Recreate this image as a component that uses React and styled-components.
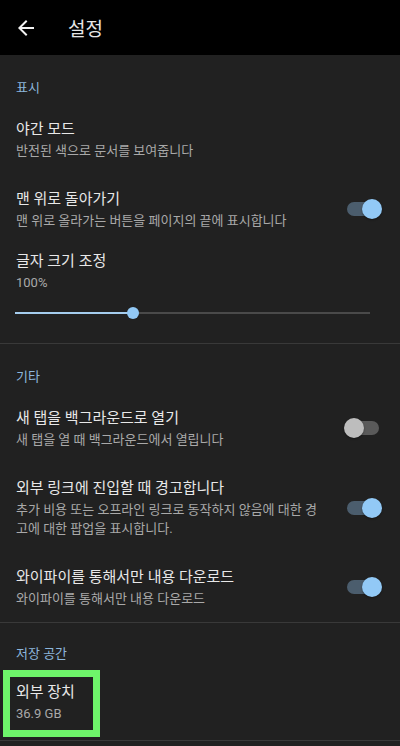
import React from "react"
import styled, {createGlobalStyle} from "styled-components"

const GlobalStyle = createGlobalStyle`
  html, body {
    margin: 0;
    padding: 0;
    background: #212121;
  }
  body {
    font-family: Roboto, "Noto Sans CJK KR", sans-serif;
    -webkit-font-smoothing: antialiased;
  }
`

const Screen = styled.div`
  width: 400px;
  min-height: 746px;
  background: #212121;
  display: flex;
  flex-direction: column;
`

const TopBar = styled.header`
  height: 55px;
  background: #000;
  display: flex;
  align-items: center;
  padding-left: 14px;
  gap: 30px;
`

const BackIcon = styled.svg`
  width: 24px;
  height: 24px;
  fill: #f2f2f2;
`

const TopTitle = styled.h1`
  margin: 0;
  font-size: 19px;
  font-weight: 400;
  color: #e6e6e6;
`

const Category = styled.div`
  padding: ${({$top = 24}) => $top}px 16px 7px;
  font-size: 13px;
  line-height: 18px;
  color: #8cb6dc;
`

const Row = styled.div`
  display: flex;
  align-items: center;
  padding: ${({$top = 14}) => $top}px 18px ${({$bottom = 14}) => $bottom}px 16px;
`

const RowText = styled.div`
  flex: 1;
  min-width: 0;
  padding-right: ${({$gap}) => ($gap ? "22px" : "0")};
`

const Title = styled.div`
  font-size: 15px;
  line-height: 22px;
  color: #e8e8e8;
`

const Summary = styled.div`
  margin-top: 1px;
  font-size: 13px;
  line-height: 19px;
  color: #a9a9a9;
`

const Divider = styled.hr`
  margin: 0;
  border: 0;
  border-top: 1px solid #393939;
`

const Switch = styled.div`
  position: relative;
  width: 38px;
  height: 20px;
  flex: none;
`

const Track = styled.div`
  position: absolute;
  left: 3px;
  right: 3px;
  top: 3px;
  height: 14px;
  border-radius: 7px;
  background: ${({$on}) => ($on ? "#4b5d6d" : "#5a5a5a")};
`

const Thumb = styled.div`
  position: absolute;
  top: 0;
  ${({$on}) => ($on ? "right: 0;" : "left: 0;")}
  width: 20px;
  height: 20px;
  border-radius: 50%;
  background: ${({$on}) => ($on ? "#92c9f6" : "#bdbdbd")};
  box-shadow: 0 1px 2px rgba(0, 0, 0, 0.4);
`

const SliderWrap = styled.div`
  position: relative;
  height: 51px;
  margin: 0 30px 0 15px;
`

const SliderRail = styled.div`
  position: absolute;
  left: 0;
  right: 0;
  top: 20px;
  height: 2px;
  background: #4a4a4a;
`

const SliderFill = styled.div`
  position: absolute;
  left: 0;
  top: 20px;
  height: 2px;
  background: #a5cdee;
`

const SliderThumb = styled.div`
  position: absolute;
  top: 15px;
  width: 12px;
  height: 12px;
  margin-left: -6px;
  border-radius: 50%;
  background: #92c9f6;
`

const Highlight = styled.div`
  width: 77px;
  margin: 0 0 3px 3px;
  padding: 4px 0 0 6px;
  height: 49px;
  border: 7px solid #6ef56a;
`

const Toggle = ({on}) => (
  <Switch>
    <Track $on={on} />
    <Thumb $on={on} />
  </Switch>
)

const Pref = ({title, summary, toggle, top}) => (
  <Row $top={top}>
    <RowText $gap={toggle !== undefined}>
      <Title>{title}</Title>
      {summary && <Summary>{summary}</Summary>}
    </RowText>
    {toggle !== undefined && <Toggle on={toggle} />}
  </Row>
)

const Slider = ({value}) => (
  <SliderWrap>
    <SliderRail />
    <SliderFill style={{width: `${value}%`}} />
    <SliderThumb style={{left: `${value}%`}} />
  </SliderWrap>
)

const App = () => (
  <Screen>
    <GlobalStyle />
    <TopBar>
      <BackIcon viewBox="0 0 24 24">
        <path d="M20 11H7.83l5.59-5.59L12 4l-8 8 8 8 1.41-1.41L7.83 13H20v-2z" />
      </BackIcon>
      <TopTitle>설정</TopTitle>
    </TopBar>

    <Category>표시</Category>
    <Pref title="야간 모드" summary="반전된 색으로 문서를 보여줍니다" />
    <Pref
      title="맨 위로 돌아가기"
      summary="맨 위로 올라가는 버튼을 페이지의 끝에 표시합니다"
      toggle={true}
    />
    <Row $top={6} $bottom={0}>
      <RowText>
        <Title>글자 크기 조정</Title>
        <Summary>100%</Summary>
      </RowText>
    </Row>
    <Slider value={33.2} />
    <Divider />

    <Category>기타</Category>
    <Pref
      title="새 탭을 백그라운드로 열기"
      summary="새 탭을 열 때 백그라운드에서 열립니다"
      toggle={false}
    />
    <Pref
      title="외부 링크에 진입할 때 경고합니다"
      summary="추가 비용 또는 오프라인 링크로 동작하지 않음에 대한 경고에 대한 팝업을 표시합니다."
      toggle={true}
    />
    <Pref
      title="와이파이를 통해서만 내용 다운로드"
      summary="와이파이를 통해서만 내용 다운로드"
      toggle={true}
    />
    <Divider />

    <Category $top={22}>저장 공간</Category>
    <Highlight>
      <Title>외부 장치</Title>
      <Summary>36.9 GB</Summary>
    </Highlight>
    <Divider />
  </Screen>
)

export default App
